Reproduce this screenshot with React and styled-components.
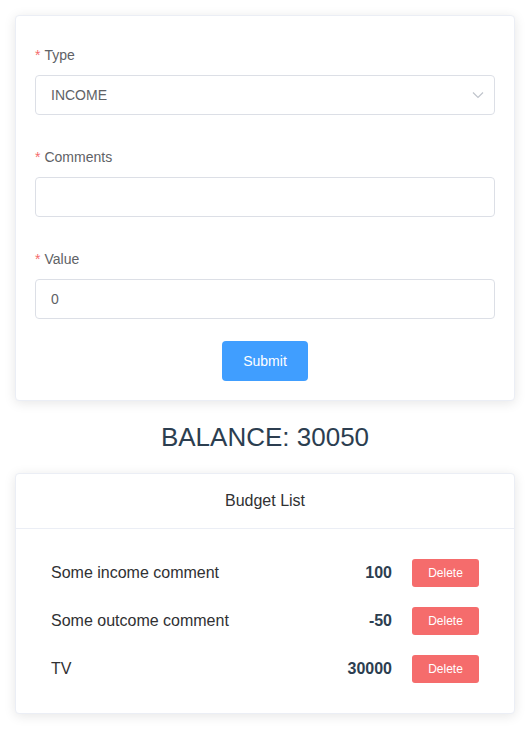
import React, { useState } from 'react';
import styled, { createGlobalStyle } from 'styled-components';

const GlobalStyle = createGlobalStyle`
  body {
    margin: 0;
    background: #fff;
    font-family: "Liberation Sans", Arial, sans-serif;
    color: #2c3e50;
  }
`;

const Page = styled.div`
  width: 500px;
  margin: 0 0 0 15px;
  padding: 15px 0 20px;
`;

const Card = styled.div`
  background: #fff;
  border: 1px solid #ebeef5;
  border-radius: 4px;
  box-shadow: 0 2px 12px 0 rgba(0, 0, 0, 0.1);
  overflow: hidden;
`;

const CardBody = styled.div`
  padding: 19px;
`;

const CardHeader = styled.div`
  padding: 17px 20px 18px;
  border-bottom: 1px solid #ebeef5;
  text-align: center;
  font-size: 16px;
  line-height: 19px;
  color: #303133;
`;

const FormItem = styled.div`
  margin-bottom: ${(p) => (p.last ? '0' : '22px')};
  display: flex;
  flex-direction: column;
  align-items: ${(p) => (p.center ? 'center' : 'stretch')};
`;

const Label = styled.label`
  font-size: 14px;
  line-height: 40px;
  color: #606266;

  &::before {
    content: '*';
    color: #f56c6c;
    margin-right: 4px;
  }
`;

const Field = styled.div`
  position: relative;
  height: 40px;
`;

const Input = styled.input`
  box-sizing: border-box;
  width: 100%;
  height: 40px;
  border: 1px solid #dcdfe6;
  border-radius: 4px;
  padding: 0 15px;
  font-family: inherit;
  font-size: 14px;
  color: #606266;
  outline: none;
  background: #fff;
`;

const Arrow = styled.svg`
  position: absolute;
  right: 11px;
  top: 14px;
`;

const Button = styled.button`
  box-sizing: border-box;
  width: ${(p) => (p.small ? '67px' : '86px')};
  height: ${(p) => (p.small ? '28px' : '40px')};
  padding: 0;
  border: none;
  border-radius: ${(p) => (p.small ? '3px' : '4px')};
  background: ${(p) => (p.danger ? '#f56c6c' : '#409eff')};
  color: #fff;
  font-family: inherit;
  font-size: ${(p) => (p.small ? '12px' : '14px')};
  cursor: pointer;
`;

const Balance = styled.h2`
  margin: 20px 0;
  text-align: center;
  font-weight: normal;
  font-size: 26px;
  line-height: 32px;
  color: #2c3e50;
`;

const ListBody = styled.div`
  padding: 20px 19px;
`;

const Row = styled.div`
  display: flex;
  align-items: center;
  height: 48px;
  padding: 0 16px;
`;

const Comment = styled.div`
  flex: 1;
  font-size: 16px;
  color: #303133;
`;

const Amount = styled.div`
  font-size: 16px;
  font-weight: bold;
  color: #2c3e50;
  margin-right: 20px;
`;

const items = [
  { id: 1, comment: 'Some income comment', value: 100 },
  { id: 2, comment: 'Some outcome comment', value: -50 },
  { id: 3, comment: 'TV', value: 30000 },
];

export default function App() {
  const [list, setList] = useState(items);
  const total = 30050;

  return (
    <Page>
      <GlobalStyle />
      <Card>
        <CardBody>
          <FormItem>
            <Label>Type</Label>
            <Field>
              <Input readOnly value="INCOME" />
              <Arrow width="12" height="12" viewBox="0 0 12 12">
                <path d="M1 3.5 L6 8.5 L11 3.5" fill="none" stroke="#c0c4cc" strokeWidth="1.2" />
              </Arrow>
            </Field>
          </FormItem>
          <FormItem>
            <Label>Comments</Label>
            <Field>
              <Input />
            </Field>
          </FormItem>
          <FormItem>
            <Label>Value</Label>
            <Field>
              <Input defaultValue="0" />
            </Field>
          </FormItem>
          <FormItem center last>
            <Button>Submit</Button>
          </FormItem>
        </CardBody>
      </Card>

      <Balance>BALANCE: {total}</Balance>

      <Card>
        <CardHeader>Budget List</CardHeader>
        <ListBody>
          {list.map((item) => (
            <Row key={item.id}>
              <Comment>{item.comment}</Comment>
              <Amount>{item.value}</Amount>
              <Button small danger onClick={() => setList(list.filter((i) => i.id !== item.id))}>
                Delete
              </Button>
            </Row>
          ))}
        </ListBody>
      </Card>
    </Page>
  );
}
